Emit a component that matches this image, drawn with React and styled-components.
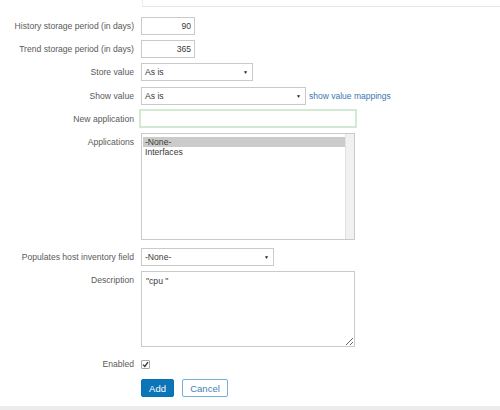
import React from 'react'
import styled, { createGlobalStyle } from 'styled-components'

const GlobalStyle = createGlobalStyle`
  html, body {
    margin: 0;
    padding: 0;
    background: #fff;
    font-family: "Liberation Sans", Arial, sans-serif;
  }
`

function App() {
  return (
    <>
      <GlobalStyle />
      <StPage>
        <StTopBox />
        <StForm>
          <StRow $mt={10}>
            <StLabel>History storage period (in days)</StLabel>
            <StNumInput readOnly value="90" />
          </StRow>
          <StRow $mt={5}>
            <StLabel>Trend storage period (in days)</StLabel>
            <StNumInput readOnly value="365" />
          </StRow>
          <StRow $mt={5}>
            <StLabel>Store value</StLabel>
            <StSelect $w={112}>
              <span>As is</span>
              <StArrow>▼</StArrow>
            </StSelect>
          </StRow>
          <StRow $mt={6}>
            <StLabel>Show value</StLabel>
            <StSelect $w={165}>
              <span>As is</span>
              <StArrow>▼</StArrow>
            </StSelect>
            <StLink href="#">show value mappings</StLink>
          </StRow>
          <StRow $mt={4}>
            <StLabel>New application</StLabel>
            <StFocusInput readOnly value="" />
          </StRow>
          <StRow $mt={5} $top>
            <StLabel>Applications</StLabel>
            <StListBox>
              <StListItems>
                <StOption $selected>-None-</StOption>
                <StOption>Interfaces</StOption>
              </StListItems>
              <StScrollTrack />
            </StListBox>
          </StRow>
          <StRow $mt={8}>
            <StLabel>Populates host inventory field</StLabel>
            <StSelect $w={133}>
              <span>-None-</span>
              <StArrow>▼</StArrow>
            </StSelect>
          </StRow>
          <StRow $mt={5} $top>
            <StLabel>Description</StLabel>
            <StTextArea readOnly value={'"cpu "'} />
          </StRow>
          <StRow $mt={8}>
            <StLabel>Enabled</StLabel>
            <StCheck>
              <svg width="7" height="7" viewBox="0 0 7 7">
                <path d="M1 3.6 L2.8 5.4 L6 1.2" fill="none" stroke="#333" strokeWidth="1.3" />
              </svg>
            </StCheck>
          </StRow>
          <StRow $mt={6}>
            <StLabel />
            <StButtons>
              <StButton $primary>Add</StButton>
              <StButton>Cancel</StButton>
            </StButtons>
          </StRow>
        </StForm>
        <StBottomBar />
      </StPage>
    </>
  )
}

const StPage = styled.div`
  width: 500px;
  height: 410px;
  overflow: hidden;
  display: flex;
  flex-direction: column;
`
const StTopBox = styled.div`
  margin-left: 142px;
  height: 6px;
  border-left: 1px solid #ececec;
  border-bottom: 1px solid #e6e6e6;
  flex-shrink: 0;
`
const StForm = styled.div`
  display: flex;
  flex-direction: column;
  flex-shrink: 0;
`
const StRow = styled.div`
  display: flex;
  align-items: ${(p) => (p.$top ? 'flex-start' : 'center')};
  margin-top: ${(p) => p.$mt}px;
  min-height: 18px;
`
const StLabel = styled.div`
  width: 134px;
  margin-right: 7px;
  flex-shrink: 0;
  text-align: right;
  font-size: 8.6px;
  line-height: 18px;
  color: #5a5a5a;
  white-space: nowrap;
`
const StNumInput = styled.input`
  box-sizing: border-box;
  width: 54px;
  height: 18px;
  border: 1px solid #cacaca;
  padding: 0 3px;
  text-align: right;
  font-family: "Liberation Sans", Arial, sans-serif;
  font-size: 8.6px;
  color: #3a3a3a;
  outline: none;
`
const StSelect = styled.div`
  box-sizing: border-box;
  width: ${(p) => p.$w}px;
  height: 18px;
  border: 1px solid #cacaca;
  padding: 0 4px 0 3px;
  display: flex;
  align-items: center;
  justify-content: space-between;
  font-size: 8.6px;
  color: #3a3a3a;
  background: #fff;
`
const StArrow = styled.span`
  font-size: 5px;
  color: #222;
`
const StLink = styled.a`
  margin-left: 3px;
  font-size: 8.5px;
  color: #3b76b0;
  text-decoration: none;
`
const StFocusInput = styled.input`
  box-sizing: border-box;
  margin-left: -2px;
  width: 218px;
  height: 19px;
  border: 2px solid #d2e9d2;
  outline: none;
  background: #fff;
`
const StListBox = styled.div`
  box-sizing: border-box;
  width: 214px;
  height: 107px;
  border: 1px solid #cacaca;
  display: flex;
  background: #fff;
`
const StListItems = styled.div`
  flex: 1;
  padding: 3px 0 0 1px;
`
const StOption = styled.div`
  height: 10px;
  line-height: 10px;
  padding-left: 2px;
  font-size: 8.6px;
  color: #3a3a3a;
  background: ${(p) => (p.$selected ? '#cbcbcb' : 'transparent')};
`
const StScrollTrack = styled.div`
  width: 8px;
  background: #f1f1f1;
  border-left: 1px solid #e2e2e2;
`
const StTextArea = styled.textarea`
  box-sizing: border-box;
  width: 214px;
  height: 76px;
  border: 1px solid #cacaca;
  padding: 4px 4px;
  font-family: "Liberation Sans", Arial, sans-serif;
  font-size: 8.6px;
  color: #3a3a3a;
  outline: none;
  resize: both;
`
const StCheck = styled.div`
  box-sizing: border-box;
  width: 9px;
  height: 9px;
  border: 1px solid #a8a8a8;
  border-radius: 1px;
  display: flex;
  align-items: center;
  justify-content: center;
  background: #fff;
`
const StButtons = styled.div`
  display: flex;
  gap: 8px;
`
const StButton = styled.button`
  box-sizing: border-box;
  height: 18px;
  padding: 0;
  width: ${(p) => (p.$primary ? '33px' : '46px')};
  border: 1px solid ${(p) => (p.$primary ? '#0a6fb0' : '#74afd9')};
  border-radius: 2px;
  background: ${(p) => (p.$primary ? '#0b75b8' : '#fff')};
  color: ${(p) => (p.$primary ? '#fff' : '#3f82b8')};
  font-family: "Liberation Sans", Arial, sans-serif;
  font-size: 9.5px;
  cursor: pointer;
`
const StBottomBar = styled.div`
  margin-top: auto;
  height: 4px;
  background: #ececec;
  flex-shrink: 0;
`

export default App
